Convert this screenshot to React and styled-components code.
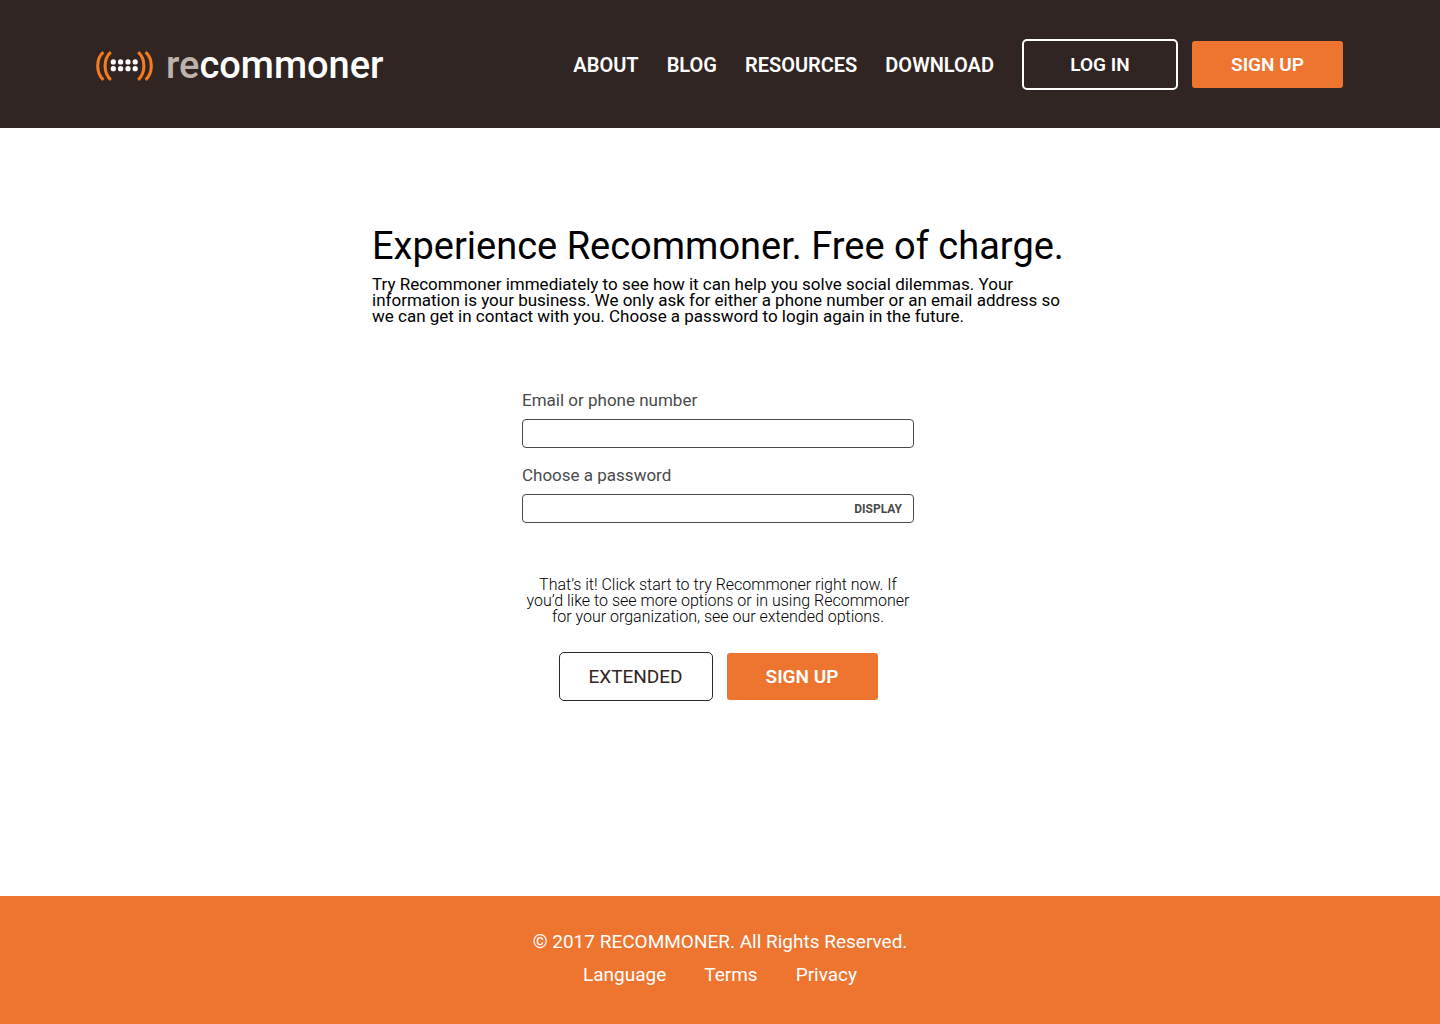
import React, { useState } from "react";
import styled, { createGlobalStyle, css } from "styled-components";

const colors = {
  bark: "#302522",
  orange: "#ed7530",
  slate: "#4a4a4a",
};

const GlobalStyle = createGlobalStyle`
  *, *::before, *::after { box-sizing: border-box; }
  body {
    margin: 0;
    background: #fff;
    color: #000;
    font-family: Roboto, "Liberation Sans", Arial, sans-serif;
  }
`;

const Page = styled.div`
  min-height: 100vh;
  display: flex;
  flex-direction: column;
`;

const Header = styled.header`
  display: flex;
  align-items: center;
  justify-content: space-between;
  padding: 39px 97px 38px 96px;
  background: ${colors.bark};
`;

const Brand = styled.a`
  display: flex;
  align-items: center;
  gap: 12px;
  color: #fff;
  text-decoration: none;
`;

const Wordmark = styled.span`
  font-size: 38px;
  line-height: 44px;
  font-weight: 500;
`;

const WordmarkPrefix = styled.span`
  color: #bdb2ae;
`;

const HeaderEnd = styled.div`
  display: flex;
  align-items: center;
  gap: 28px;
`;

const Nav = styled.nav`
  display: flex;
  gap: 28px;
`;

const NavLink = styled.a`
  color: #fff;
  font-size: 20px;
  line-height: 24px;
  font-weight: 600;
  text-decoration: none;
`;

const Actions = styled.div`
  display: flex;
  align-items: center;
  justify-content: center;
  gap: 14px;
`;

const variants = {
  solid: css`
    width: 151px;
    height: 47px;
    border: 0;
    background: ${colors.orange};
    color: #fff;
    font-weight: 600;
  `,
  light: css`
    width: 156px;
    height: 51px;
    border: 2px solid #fff;
    background: transparent;
    color: #fff;
    font-weight: 600;
  `,
  dark: css`
    width: 154px;
    height: 49px;
    border: 1px solid ${colors.bark};
    background: transparent;
    color: ${colors.bark};
    font-weight: 400;
  `,
};

const Button = styled.button`
  border-radius: ${(p) => (p.$variant === "solid" ? 3 : 5)}px;
  padding: 0;
  font-family: inherit;
  font-size: 19px;
  line-height: 24px;
  cursor: pointer;
  ${(p) => variants[p.$variant]}
`;

const Main = styled.main`
  flex: 1;
  width: 100%;
  max-width: 696px;
  margin: 0 auto;
  padding: 96px 0;
`;

const Title = styled.h1`
  margin: 0;
  font-size: 38px;
  line-height: 44px;
  font-weight: 400;
  white-space: nowrap;
`;

const Intro = styled.p`
  margin: 8px 0 0;
  font-size: 17px;
  line-height: 16px;
`;

const Form = styled.form`
  width: 396px;
  margin: 68px auto 0;
  padding-right: 4px;
`;

const Field = styled.div`
  display: flex;
  flex-direction: column;
  gap: 10px;
  margin-bottom: 19px;
`;

const Label = styled.label`
  color: ${colors.slate};
  font-size: 17px;
  line-height: 17px;
`;

const InputBox = styled.div`
  display: flex;
  height: 29px;
  border: 1px solid ${colors.slate};
  border-radius: 4px;
`;

const Input = styled.input`
  flex: 1;
  min-width: 0;
  padding: 0 10px;
  border: 0;
  border-radius: 4px;
  background: transparent;
  color: ${colors.slate};
  font-family: inherit;
  font-size: 16px;
`;

const Reveal = styled.button`
  padding: 0 11px;
  border: 0;
  background: transparent;
  color: ${colors.slate};
  font-family: inherit;
  font-size: 12px;
  line-height: 16px;
  font-weight: 700;
  cursor: pointer;
`;

const Note = styled.p`
  margin: 54px 0 27px;
  font-size: 16px;
  line-height: 16px;
  font-weight: 300;
  text-align: center;
  white-space: nowrap;
`;

const Footer = styled.footer`
  display: flex;
  flex-direction: column;
  align-items: center;
  gap: 9px;
  padding: 34px 96px 37px;
  background: ${colors.orange};
  color: #fff;
  font-size: 19px;
  line-height: 24px;
`;

const Copyright = styled.p`
  margin: 0;
`;

const FooterNav = styled.nav`
  display: flex;
  gap: 38px;
`;

const FooterLink = styled.a`
  color: #fff;
  text-decoration: none;
`;

function LogoMark() {
  return (
    <svg width="58" height="32" viewBox="0 -2 58 32" aria-hidden="true">
      <g fill="none" stroke="#f47b20" strokeWidth="3.1">
        <path d="M7.4 1.2C-0.2 8 -0.2 22 7.4 28.8" />
        <path d="M14.8 1.2C7.2 8 7.2 22 14.8 28.8" />
        <path d="M42.2 1.2C49.8 8 49.8 22 42.2 28.8" />
        <path d="M49.6 1.2C57.2 8 57.2 22 49.6 28.8" />
      </g>
      <g fill="#fff">
        {[17.3, 24.6, 32, 39.2].map((x) => (
          <React.Fragment key={x}>
            <circle cx={x} cy="10.9" r="2.6" />
            <circle cx={x} cy="17.7" r="2.6" />
          </React.Fragment>
        ))}
      </g>
    </svg>
  );
}

export default function App() {
  const [shown, setShown] = useState(false);
  return (
    <Page>
      <GlobalStyle />
      <Header>
        <Brand href="#home">
          <LogoMark />
          <Wordmark>
            <WordmarkPrefix>re</WordmarkPrefix>commoner
          </Wordmark>
        </Brand>
        <HeaderEnd>
          <Nav>
            <NavLink href="#about">ABOUT</NavLink>
            <NavLink href="#blog">BLOG</NavLink>
            <NavLink href="#resources">RESOURCES</NavLink>
            <NavLink href="#download">DOWNLOAD</NavLink>
          </Nav>
          <Actions>
            <Button type="button" $variant="light">LOG IN</Button>
            <Button type="button" $variant="solid">SIGN UP</Button>
          </Actions>
        </HeaderEnd>
      </Header>
      <Main>
        <Title>Experience Recommoner. Free of charge.</Title>
        <Intro>
          Try Recommoner immediately to see how it can help you solve social dilemmas. Your
          <br />
          information is your business. We only ask for either a phone number or an email address so
          <br />
          we can get in contact with you. Choose a password to login again in the future.
        </Intro>
        <Form onSubmit={(e) => e.preventDefault()}>
          <Field>
            <Label htmlFor="contact">Email or phone number</Label>
            <InputBox>
              <Input id="contact" type="text" />
            </InputBox>
          </Field>
          <Field>
            <Label htmlFor="password">Choose a password</Label>
            <InputBox>
              <Input id="password" type={shown ? "text" : "password"} />
              <Reveal type="button" onClick={() => setShown(!shown)}>DISPLAY</Reveal>
            </InputBox>
          </Field>
          <Note>
            That’s it! Click start to try Recommoner right now. If
            <br />
            you’d like to see more options or in using Recommoner
            <br />
            for your organization, see our extended options.
          </Note>
          <Actions>
            <Button type="button" $variant="dark">EXTENDED</Button>
            <Button type="submit" $variant="solid">SIGN UP</Button>
          </Actions>
        </Form>
      </Main>
      <Footer>
        <Copyright>© 2017 RECOMMONER. All Rights Reserved.</Copyright>
        <FooterNav>
          <FooterLink href="#language">Language</FooterLink>
          <FooterLink href="#terms">Terms</FooterLink>
          <FooterLink href="#privacy">Privacy</FooterLink>
        </FooterNav>
      </Footer>
    </Page>
  );
}
